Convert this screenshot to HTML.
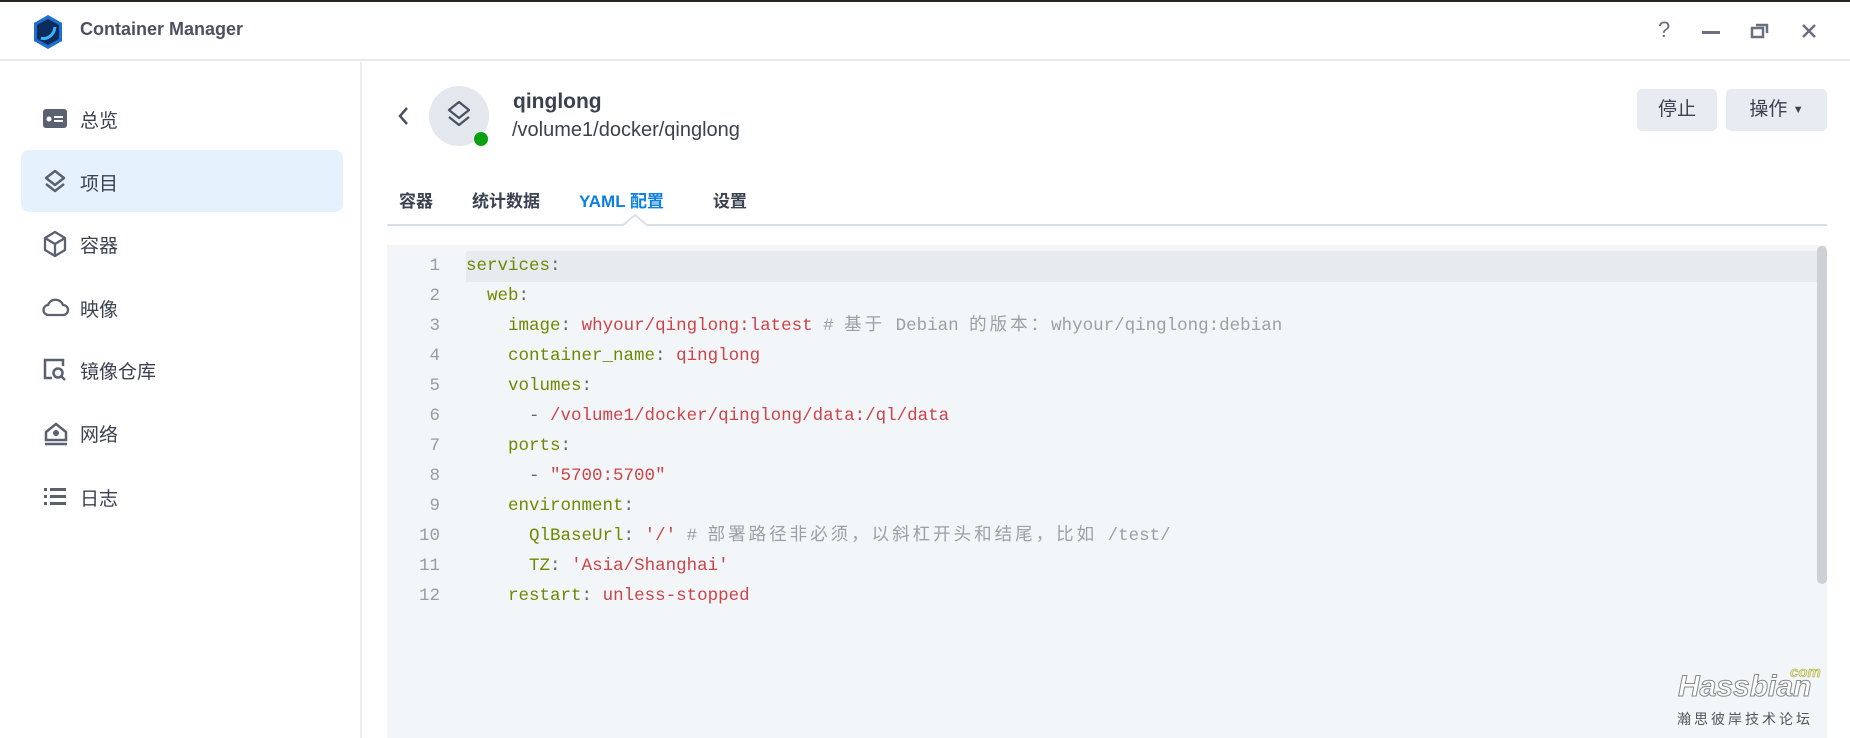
<!DOCTYPE html>
<html><head><meta charset="utf-8"><style>
*{margin:0;padding:0;box-sizing:border-box}
body{width:1850px;height:738px;overflow:hidden;background:#fff;font-family:"Liberation Sans","Noto Sans CJK SC",sans-serif;position:relative;color:#3a4150}
.abs{position:absolute}
.top{left:0;top:0;width:1850px;height:2px;background:#2a2520}
.hdr{left:0;top:2px;width:1850px;height:59px;border-bottom:2px solid #e8eaed}
.title{left:80px;top:19px;font-size:18px;font-weight:bold;color:#4a5262}
.side{left:0;top:62px;width:362px;height:676px;border-right:2px solid #eceef1}
.item{position:absolute;left:80px;font-size:19px;color:#3a4150}
.sel{left:21px;top:150px;width:322px;height:62px;background:#e5f1fd;border-radius:8px}
.ico{position:absolute;left:42px}
.btn{position:absolute;top:89px;height:42px;background:#e7ecf2;border-radius:5px;font-size:19px;color:#3a4150;line-height:42px;text-align:center}
.tab{position:absolute;top:187px;font-size:17px;font-weight:bold;color:#3a4150}
.ed{left:387px;top:245px;width:1440px;height:493px;background:#f3f6f9}
.code{left:387px;top:251px;font-family:"Liberation Mono","Noto Sans CJK SC",monospace;font-size:17.5px;line-height:30px;white-space:pre}
.ln{position:absolute;left:0;width:53px;text-align:right;color:#9a9c9e}
.cl{position:absolute;left:79px}
.k{color:#6b8a00}.s{color:#cc4448}.c{color:#9d9fa1}.p{color:#666}
.z{letter-spacing:3px}
</style></head><body>
<div class="abs top"></div>
<div class="abs hdr"></div>
<svg class="abs" style="left:32px;top:14px" width="32" height="36" viewBox="0 0 32 36"><path d="M16 1 L30 9 L30 27 L16 35 L2 27 L2 9Z" fill="#1c6fd0"/><path d="M16 5 L27 11 L27 25 L16 31 L5 25 L5 11Z" fill="#0d2c5c"/><path d="M9 24 C14 26 22 22 23 13" stroke="#3db2ff" stroke-width="3" fill="none"/></svg>
<div class="abs title">Container Manager</div>
<div class="abs" style="left:1658px;top:17px;font-size:22px;color:#6a7080">?</div>
<div class="abs" style="left:1702px;top:31px;width:18px;height:3px;background:#6a7080"></div>
<svg class="abs" style="left:1750px;top:22px" width="20" height="18"><rect x="2" y="6" width="11" height="9" fill="none" stroke="#6a7080" stroke-width="2.5"/><path d="M6 3 H17 V11" fill="none" stroke="#6a7080" stroke-width="2.5"/></svg>
<svg class="abs" style="left:1800px;top:22px" width="18" height="18"><path d="M3 3 L15 15 M15 3 L3 15" stroke="#6a7080" stroke-width="2.5"/></svg>

<div class="abs side"></div>
<div class="abs sel"></div>
<svg class="ico" style="top:107px" width="26" height="24"><rect x="1" y="2" width="24" height="19" rx="3" fill="#5a6170"/><circle cx="7" cy="12" r="2.5" fill="#fff"/><rect x="12" y="9" width="9" height="2" fill="#fff"/><rect x="12" y="13" width="9" height="2" fill="#fff"/></svg>
<div class="item" style="top:106px">总览</div>
<svg class="ico" style="top:168px" width="26" height="28" viewBox="0 0 26 28"><path d="M13 3 L22 10 L13 17 L4 10Z" fill="none" stroke="#5a6170" stroke-width="2.5" stroke-linejoin="round"/><path d="M4 16 L13 23 L22 16" fill="none" stroke="#5a6170" stroke-width="2.5" stroke-linejoin="round"/></svg>
<div class="item" style="top:169px">项目</div>
<svg class="ico" style="top:230px" width="26" height="28"><path d="M13 2 L23 8 L23 20 L13 26 L3 20 L3 8Z M3 8 L13 14 L23 8 M13 14 V26" fill="none" stroke="#5a6170" stroke-width="2.3" stroke-linejoin="round"/></svg>
<div class="item" style="top:231px">容器</div>
<svg class="ico" style="top:295px" width="28" height="24"><path d="M7 20 H21 A5 5 0 0 0 21 10 A8 8 0 0 0 6 10 A5 5 0 0 0 7 20Z" fill="none" stroke="#5a6170" stroke-width="2.3"/></svg>
<div class="item" style="top:295px">映像</div>
<svg class="ico" style="top:357px" width="28" height="26"><path d="M10 21 H3 V3 H21 V9" fill="none" stroke="#5a6170" stroke-width="2.5"/><circle cx="16" cy="16" r="4.5" fill="none" stroke="#5a6170" stroke-width="2.5"/><path d="M19 19 L23 23" stroke="#5a6170" stroke-width="2.5"/></svg>
<div class="item" style="top:357px">镜像仓库</div>
<svg class="ico" style="top:420px" width="28" height="26"><path d="M4 12 L14 4 L24 12 V20 H4Z" fill="none" stroke="#5a6170" stroke-width="2.5"/><circle cx="14" cy="13" r="3" fill="#5a6170"/><path d="M3 24 H25" stroke="#5a6170" stroke-width="2.5"/></svg>
<div class="item" style="top:420px">网络</div>
<svg class="ico" style="top:484px" width="28" height="24"><g fill="#5a6170"><rect x="2" y="4" width="3" height="3"/><rect x="8" y="4" width="16" height="3"/><rect x="2" y="11" width="3" height="3"/><rect x="8" y="11" width="16" height="3"/><rect x="2" y="18" width="3" height="3"/><rect x="8" y="18" width="16" height="3"/></g></svg>
<div class="item" style="top:484px">日志</div>

<svg class="abs" style="left:396px;top:105px" width="14" height="22"><path d="M11 3 L4 11 L11 19" fill="none" stroke="#4a5262" stroke-width="2.5"/></svg>
<div class="abs" style="left:429px;top:86px;width:60px;height:60px;border-radius:50%;background:#e3e8ef"></div>
<svg class="abs" style="left:444px;top:99px" width="30" height="34"><path d="M15 3 L25 11 L15 19 L5 11Z" fill="none" stroke="#4a5262" stroke-width="2.3" stroke-linejoin="round"/><path d="M5 18 L15 26 L25 18" fill="none" stroke="#4a5262" stroke-width="2.3" stroke-linejoin="round"/></svg>
<div class="abs" style="left:473px;top:131px;width:16px;height:16px;border-radius:50%;background:#0aa012;border:1px solid #fff"></div>
<div class="abs" style="left:513px;top:90px;font-size:21px;font-weight:bold;color:#3a4150">qinglong</div>
<div class="abs" style="left:512px;top:119px;font-size:20px;color:#3a4150">/volume1/docker/qinglong</div>
<div class="btn" style="left:1637px;width:80px">停止</div>
<div class="btn" style="left:1726px;width:101px">操作 <span style="font-size:11px;position:relative;top:-2px">▼</span></div>

<div class="tab" style="left:399px">容器</div>
<div class="tab" style="left:472px">统计数据</div>
<div class="tab" style="left:579px;color:#0c7fe2">YAML 配置</div>
<div class="tab" style="left:713px">设置</div>
<div class="abs" style="left:387px;top:224px;width:1440px;height:2px;background:#d8e1ea"></div>
<svg class="abs" style="left:622px;top:214px" width="26" height="13"><path d="M0 12 L13 1 L26 12" fill="#fff" stroke="#d8e1ea" stroke-width="2"/><rect x="2" y="11" width="22" height="3" fill="#fff"/></svg>

<div class="abs ed"></div>
<div class="abs" style="left:466px;top:251px;width:1361px;height:31px;background:#e7ebef"></div>
<div class="abs" style="left:1817px;top:246px;width:10px;height:338px;background:#cdd1d5;border-radius:5px"></div>
<div class="abs code" style="width:1400px">
<div class="ln" style="top:0">1</div><div class="cl" style="top:0"><span class="k">services</span><span class="p">:</span></div>
<div class="ln" style="top:30px">2</div><div class="cl" style="top:30px">  <span class="k">web</span><span class="p">:</span></div>
<div class="ln" style="top:60px">3</div><div class="cl" style="top:60px">    <span class="k">image</span><span class="p">:</span> <span class="s">whyour/qinglong:latest</span> <span class="c"># <span class="z">基于</span> Debian <span class="z">的版本：</span>whyour/qinglong:debian</span></div>
<div class="ln" style="top:90px">4</div><div class="cl" style="top:90px">    <span class="k">container_name</span><span class="p">:</span> <span class="s">qinglong</span></div>
<div class="ln" style="top:120px">5</div><div class="cl" style="top:120px">    <span class="k">volumes</span><span class="p">:</span></div>
<div class="ln" style="top:150px">6</div><div class="cl" style="top:150px">      <span class="p">-</span> <span class="s">/volume1/docker/qinglong/data:/ql/data</span></div>
<div class="ln" style="top:180px">7</div><div class="cl" style="top:180px">    <span class="k">ports</span><span class="p">:</span></div>
<div class="ln" style="top:210px">8</div><div class="cl" style="top:210px">      <span class="p">-</span> <span class="s">"5700:5700"</span></div>
<div class="ln" style="top:240px">9</div><div class="cl" style="top:240px">    <span class="k">environment</span><span class="p">:</span></div>
<div class="ln" style="top:270px">10</div><div class="cl" style="top:270px">      <span class="k">QlBaseUrl</span><span class="p">:</span> <span class="s">'/'</span> <span class="c"># <span class="z">部署路径非必须，以斜杠开头和结尾，比如</span> /test/</span></div>
<div class="ln" style="top:300px">11</div><div class="cl" style="top:300px">      <span class="k">TZ</span><span class="p">:</span> <span class="s">'Asia/Shanghai'</span></div>
<div class="ln" style="top:330px">12</div><div class="cl" style="top:330px">    <span class="k">restart</span><span class="p">:</span> <span class="s">unless-stopped</span></div>
</div>

<div class="abs" style="left:1678px;top:670px;font-size:30px;font-style:italic;font-weight:bold;color:#fff;-webkit-text-stroke:1px #888">Hassbian</div>
<div class="abs" style="left:1790px;top:664px;font-size:15px;font-style:italic;font-weight:bold;color:#f0f060;-webkit-text-stroke:0.5px #999">com</div>
<div class="abs" style="left:1677px;top:709px;font-size:14px;color:#555;letter-spacing:3px">瀚思彼岸技术论坛</div>
</body></html>
